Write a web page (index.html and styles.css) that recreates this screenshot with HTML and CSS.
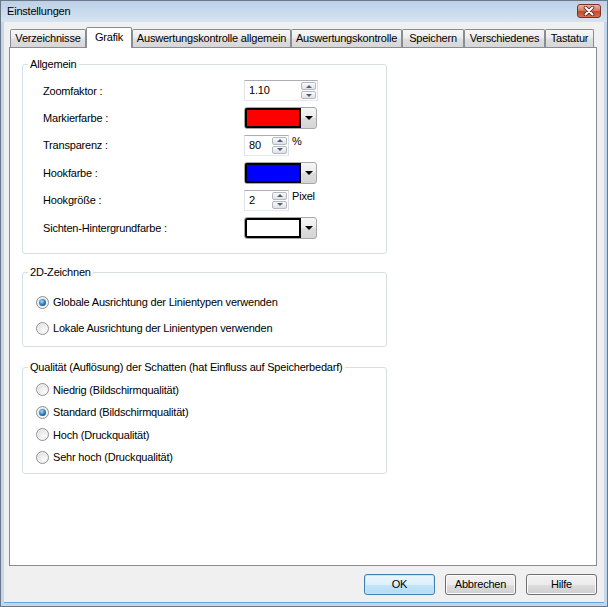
FILE: index.html
```html
<!DOCTYPE html>
<html lang="de">
<head>
<meta charset="utf-8">
<title>Einstellungen</title>
<link rel="stylesheet" href="styles.css">
</head>
<body>
<div class="window">
  <div class="titlebar">
    <span class="title">Einstellungen</span>
    <span class="close">
      <svg width="12" height="10" viewBox="0 0 12 10">
        <path d="M2.5 1.5 L9.5 8.5 M9.5 1.5 L2.5 8.5" stroke="#5b1b12" stroke-width="3.6" stroke-linecap="round" fill="none"/>
        <path d="M2.5 1.5 L9.5 8.5 M9.5 1.5 L2.5 8.5" stroke="#ffffff" stroke-width="2" stroke-linecap="round" fill="none"/>
      </svg>
    </span>
  </div>
  <div class="client">
    <div class="tabs">
      <div class="tab w-verz">Verzeichnisse</div>
      <div class="tab active w-grafik">Grafik</div>
      <div class="tab w-ausall">Auswertungskontrolle allgemein</div>
      <div class="tab w-aus">Auswertungskontrolle</div>
      <div class="tab w-spei">Speichern</div>
      <div class="tab w-versch">Verschiedenes</div>
      <div class="tab w-tast">Tastatur</div>
    </div>
    <div class="panel">
      <fieldset class="group g1">
        <legend>Allgemein</legend>
        <div class="form">
          <span class="lbl">Zoomfaktor :</span>
          <div class="ctl">
            <div class="spin wide"><span class="val">1.10</span><span class="btns"><span class="sb up"></span><span class="sb down"></span></span></div>
          </div>
          <span class="lbl">Markierfarbe :</span>
          <div class="ctl">
            <div class="combo"><span class="swatch red"></span><span class="arrow"></span></div>
          </div>
          <span class="lbl">Transparenz :</span>
          <div class="ctl">
            <div class="spin narrow"><span class="val">80</span><span class="btns"><span class="sb up"></span><span class="sb down"></span></span></div>
            <span class="unit">%</span>
          </div>
          <span class="lbl">Hookfarbe :</span>
          <div class="ctl">
            <div class="combo"><span class="swatch blue"></span><span class="arrow"></span></div>
          </div>
          <span class="lbl">Hookgröße :</span>
          <div class="ctl">
            <div class="spin narrow"><span class="val">2</span><span class="btns"><span class="sb up"></span><span class="sb down"></span></span></div>
            <span class="unit">Pixel</span>
          </div>
          <span class="lbl">Sichten-Hintergrundfarbe :</span>
          <div class="ctl">
            <div class="combo"><span class="swatch white"></span><span class="arrow"></span></div>
          </div>
        </div>
      </fieldset>

      <fieldset class="group g2">
        <legend>2D-Zeichnen</legend>
        <div class="radios">
          <div class="opt"><span class="radio on"></span><span>Globale Ausrichtung der Linientypen verwenden</span></div>
          <div class="opt"><span class="radio"></span><span>Lokale Ausrichtung der Linientypen verwenden</span></div>
        </div>
      </fieldset>

      <fieldset class="group g3">
        <legend>Qualität (Auflösung) der Schatten (hat Einfluss auf Speicherbedarf)</legend>
        <div class="radios">
          <div class="opt"><span class="radio"></span><span>Niedrig (Bildschirmqualität)</span></div>
          <div class="opt"><span class="radio on"></span><span>Standard (Bildschirmqualität)</span></div>
          <div class="opt"><span class="radio"></span><span>Hoch (Druckqualität)</span></div>
          <div class="opt"><span class="radio"></span><span>Sehr hoch (Druckqualität)</span></div>
        </div>
      </fieldset>
    </div>
    <div class="buttons">
      <div class="btn default">OK</div>
      <div class="btn">Abbrechen</div>
      <div class="btn">Hilfe</div>
    </div>
  </div>
</div>
</body>
</html>
```
FILE: styles.css
```css
* { box-sizing: border-box; }

html, body {
  margin: 0;
  padding: 0;
  background: #ffffff;
}

body {
  font-family: "Liberation Sans", Arial, sans-serif;
  font-size: 11px;
  letter-spacing: -0.2px;
  color: #000000;
}

.window {
  width: 608px;
  height: 607px;
  border: 1px solid #6a7888;
  background: #c3d6ec;
  display: flex;
  flex-direction: column;
}

.titlebar {
  height: 21px;
  flex: none;
  display: flex;
  justify-content: space-between;
  align-items: flex-start;
  padding: 0 6px 0 6px;
  background: linear-gradient(to bottom, #bcd0e7 0%, #c9daed 50%, #d6e3f1 100%);
}

.title {
  line-height: 21px;
  color: #000000;
}

.close {
  margin-top: 3px;
  width: 24px;
  height: 14px;
  border: 1px solid #7a3325;
  border-radius: 3px;
  background: linear-gradient(to bottom, #eab3a4 0%, #d97b64 45%, #c7482d 55%, #d8704f 100%);
  display: flex;
  align-items: center;
  justify-content: center;
}

.close svg { display: block; }

.client {
  flex: 1;
  margin: 0 3px 3px 3px;
  background: #f0f0f0;
  display: flex;
  flex-direction: column;
  padding: 5px 7px 7px 5px;
  border-bottom: 1px solid #5aa8e2;
}

.tabs {
  height: 20px;
  flex: none;
  display: flex;
  align-items: flex-end;
  padding-left: 1px;
}

.tab {
  flex: none;
  height: 18px;
  border: 1px solid #898c95;
  border-bottom: 0;
  border-radius: 2px 2px 0 0;
  line-height: 17px;
  text-align: center;
  white-space: nowrap;
  background: linear-gradient(to bottom, #f7f7f7 0%, #ececec 45%, #dedede 55%, #d7d7d7 100%);
}

.tab.active {
  height: 21px;
  line-height: 19px;
  margin-bottom: -1px;
  background: #ffffff;
  z-index: 1;
}

.w-verz { width: 76px; }
.w-grafik { width: 46px; }
.w-ausall { width: 159px; }
.w-aus { width: 111px; }
.w-spei { width: 62px; }
.w-versch { width: 81px; }
.w-tast { width: 49px; }

.panel {
  flex: 1;
  border: 1px solid #898c95;
  background: #ffffff;
  padding: 0 0 0 12px;
}

.group {
  width: 365px;
  margin: 0;
  padding: 0;
  border: 1px solid #d5dfe5;
  border-radius: 3px;
  min-width: 0;
}

.group legend {
  padding: 0 2px;
  margin-left: 5px;
  line-height: 13px;
  color: #000000;
}

.g1 { margin-top: 10px; }
.g2 { margin-top: 12px; }
.g3 { margin-top: 14px; }

.form {
  display: grid;
  grid-template-columns: 201px auto;
  grid-auto-rows: 27.4px;
  align-items: center;
  padding: 6px 0 12px 20px;
}

.lbl { white-space: nowrap; }

.ctl {
  display: flex;
  align-items: flex-start;
  gap: 3px;
}

.spin {
  height: 21px;
  display: flex;
  align-items: stretch;
  background: #ffffff;
  border: 1px solid;
  border-color: #abadb3 #dbdfe6 #e3e9ef #e2e3ea;
}

.spin.wide { width: 74px; }
.spin.narrow { width: 45px; }

.spin .val {
  flex: 1;
  padding-left: 4px;
  line-height: 19px;
}

.btns {
  width: 17px;
  padding: 1px 1px 1px 1px;
  display: flex;
  flex-direction: column;
  gap: 1px;
}

.sb {
  flex: 1;
  border: 1px solid #b4b8bf;
  border-radius: 2px;
  background: linear-gradient(to bottom, #fbfbfb 0%, #eeeeee 50%, #e1e1e1 100%);
  display: flex;
  align-items: center;
  justify-content: center;
}

.sb::after {
  content: "";
  width: 0;
  height: 0;
  border-left: 3px solid transparent;
  border-right: 3px solid transparent;
}

.sb.up::after { border-bottom: 3px solid #4a5f86; }
.sb.down::after { border-top: 3px solid #4a5f86; }

.unit {
  line-height: 13px;
}

.combo {
  width: 73px;
  height: 22px;
  display: flex;
  border: 1px solid #a7a7a7;
  border-radius: 3px;
  background: linear-gradient(to bottom, #f6f6f6 0%, #ebebeb 50%, #dddddd 51%, #d5d5d5 100%);
  overflow: hidden;
}

.swatch {
  width: 56px;
  border: 2px solid #000000;
}

.swatch.red { background: #ff0000; }
.swatch.blue { background: #0000ff; }
.swatch.white { background: #ffffff; }

.arrow {
  flex: 1;
  display: flex;
  align-items: center;
  justify-content: center;
}

.arrow::after {
  content: "";
  width: 0;
  height: 0;
  border-left: 4px solid transparent;
  border-right: 4px solid transparent;
  border-top: 4px solid #000000;
}

.radios { display: flex; flex-direction: column; }

.g2 .radios { padding: 10px 0 5px 13px; }
.g3 .radios { padding: 4.4px 0 5px 13px; }

.opt {
  display: flex;
  align-items: center;
  gap: 4px;
  white-space: nowrap;
}

.g2 .opt { height: 26px; }
.g3 .opt { height: 22.4px; }

.radio {
  flex: none;
  width: 13px;
  height: 13px;
  border-radius: 50%;
  border: 1px solid #8f9091;
  background: radial-gradient(circle at 65% 70%, #fbfbfb 0%, #ececec 45%, #d2d2d2 100%);
  box-shadow: inset 0 0 0 1px #f6f6f6;
  display: flex;
  align-items: center;
  justify-content: center;
}

.radio.on::after {
  content: "";
  width: 7px;
  height: 7px;
  border-radius: 50%;
  background: radial-gradient(circle at 40% 35%, #b6e0fa 0%, #4c9ad8 35%, #1a5b98 70%, #12406f 100%);
}

.buttons {
  flex: none;
  margin-top: 8px;
  height: 21px;
  display: flex;
  justify-content: flex-end;
  gap: 10px;
}

.btn {
  width: 71px;
  height: 21px;
  border: 1px solid #707070;
  border-radius: 3px;
  background: linear-gradient(to bottom, #f2f2f2 0%, #ebebeb 50%, #dddddd 51%, #cfcfcf 100%);
  box-shadow: inset 0 0 0 1px #fbfbfb;
  text-align: center;
  line-height: 19px;
}

.btn.default {
  border-color: #3c7fb1;
  background: linear-gradient(to bottom, #eaf6fd 0%, #dcf0fb 50%, #c4e5f8 51%, #b3dcf3 100%);
  box-shadow: inset 0 0 0 1px #c6e6f8;
}
```
